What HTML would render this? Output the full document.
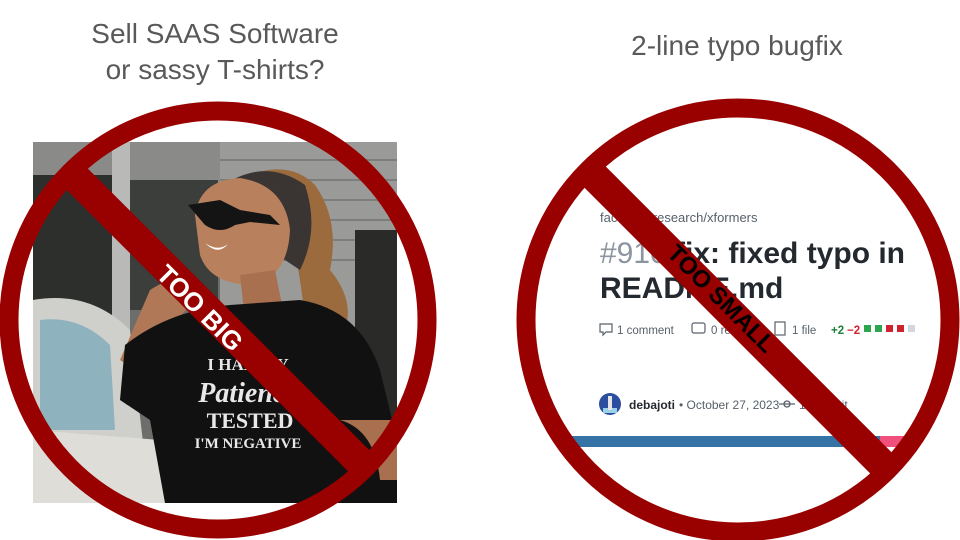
<!DOCTYPE html>
<html><head><meta charset="utf-8"><style>
html,body{margin:0;padding:0;background:#fff;width:960px;height:540px;overflow:hidden}
svg{display:block}
</style></head><body>
<svg width="960" height="540" viewBox="0 0 960 540" xmlns="http://www.w3.org/2000/svg" font-family="Liberation Sans, Arial, sans-serif">
<rect width="960" height="540" fill="#fff"/>
<g fill="#595959" font-size="28" text-anchor="middle">
<text x="215" y="43">Sell SAAS Software</text>
<text x="215" y="79">or sassy T-shirts?</text>
<text x="737" y="55">2-line typo bugfix</text>
</g>
<defs>
<clipPath id="ph"><rect x="33" y="142" width="364" height="361"/></clipPath>
<clipPath id="rc"><circle cx="738" cy="320" r="205"/></clipPath>
</defs>
<g clip-path="url(#ph)">
<rect x="33" y="142" width="364" height="361" fill="#6d6d6b"/>
<rect x="33" y="142" width="190" height="60" fill="#8a8a88"/>
<rect x="33" y="175" width="80" height="150" fill="#2c2f2c"/>
<rect x="128" y="180" width="90" height="130" fill="#3b3e3a"/>
<rect x="112" y="142" width="18" height="200" fill="#b9b9b7"/>
<rect x="220" y="142" width="177" height="361" fill="#9a9a98"/>
<g stroke="#7d7d7b" stroke-width="2">
<line x1="220" y1="160" x2="397" y2="160"/><line x1="220" y1="180" x2="397" y2="180"/><line x1="220" y1="200" x2="397" y2="200"/><line x1="220" y1="220" x2="397" y2="220"/><line x1="220" y1="240" x2="397" y2="240"/><line x1="220" y1="260" x2="397" y2="260"/>
</g>
<rect x="355" y="230" width="42" height="273" fill="#2a2a28"/>
<path d="M33 300 Q90 290 130 330 L150 503 L33 503Z" fill="#cfcfcc"/>
<path d="M40 320 Q80 315 110 345 L115 430 L40 430Z" fill="#8fb2bf"/>
<path d="M33 430 L160 440 L170 503 L33 503Z" fill="#deddd8"/>
<path d="M250 175 Q290 160 315 185 Q340 220 330 270 Q355 300 345 330 L305 320 Q300 270 290 230Z" fill="#9b6b3e"/>
<path d="M232 180 Q270 160 305 185 Q320 230 300 270 L270 250 Q250 200 232 180Z" fill="#3a3533"/>
<path d="M195 215 Q200 180 240 178 Q285 185 290 230 Q288 275 255 285 Q210 285 200 255Z" fill="#b8805d"/>
<path d="M188 205 L220 200 L240 210 L270 215 L280 225 L250 222 L235 225 Q220 235 205 225Z" fill="#141414"/>
<path d="M205 243 Q218 252 228 244 Q218 256 205 243Z" fill="#fff"/>
<path d="M240 275 L275 270 L285 320 L245 320Z" fill="#a8704f"/>
<path d="M150 290 Q180 270 200 285 Q190 310 175 320 L150 380 L120 360Z" fill="#b07856"/>
<path d="M125 345 Q170 310 230 305 L300 300 Q360 310 380 370 L397 440 L397 503 L165 503 L150 420 L120 400Z" fill="#111"/>
<g fill="#e8e8e8" text-anchor="middle" font-family="Liberation Serif, serif" font-weight="bold">
<text x="248" y="370" font-size="17">I HAD MY</text>
<text x="248" y="402" font-size="28" font-style="italic">Patience</text>
<text x="250" y="428" font-size="22">TESTED</text>
<text x="248" y="448" font-size="15">I'M NEGATIVE</text>
</g>
<path d="M340 420 Q375 430 380 480 L397 480 L397 420Z" fill="#a8704f"/>
</g>
<g clip-path="url(#rc)">
<text x="600" y="222" font-size="13" fill="#57606a">facebookresearch/xformers</text>
<text x="600" y="263" font-size="30" fill="#8c959f">#910</text>
<text x="675" y="263" font-size="30" font-weight="bold" fill="#24292f">fix: fixed typo in</text>
<text x="600" y="298" font-size="30" font-weight="bold" fill="#24292f">README.md</text>
<g font-size="11.5" fill="#57606a">
<path d="M600 324 h12 v8 h-6 l-3 3 v-3 h-3z" fill="none" stroke="#57606a" stroke-width="1.2"/>
<text x="617" y="334">1 comment</text>
<rect x="692" y="323" width="13" height="10" rx="2" fill="none" stroke="#57606a" stroke-width="1.2"/>
<text x="711" y="334">0 reviews</text>
<rect x="775" y="322" width="10" height="13" fill="none" stroke="#57606a" stroke-width="1.2"/>
<text x="792" y="334">1 file</text>
<text x="831" y="334" fill="#1a7f37" font-weight="bold">+2</text>
<text x="847" y="334" fill="#cf222e" font-weight="bold">−2</text>
<rect x="864" y="325" width="7" height="7" fill="#2da44e"/>
<rect x="875" y="325" width="7" height="7" fill="#2da44e"/>
<rect x="886" y="325" width="7" height="7" fill="#cf222e"/>
<rect x="897" y="325" width="7" height="7" fill="#cf222e"/>
<rect x="908" y="325" width="7" height="7" fill="#d0d7de"/>
</g>
<circle cx="610" cy="404" r="11" fill="#2b4f9e"/>
<rect x="603" y="408" width="14" height="5" fill="#9ad3e8"/>
<rect x="608" y="396" width="4" height="14" fill="#e6e6e6"/>
<text x="629" y="409" font-size="12" font-weight="bold" fill="#24292f">debajoti</text>
<text x="679" y="409" font-size="12" fill="#57606a">• October 27, 2023</text>
<circle cx="787" cy="404" r="3" fill="none" stroke="#57606a" stroke-width="1.3"/>
<line x1="779" y1="404" x2="795" y2="404" stroke="#57606a" stroke-width="1.3"/>
<text x="799" y="409" font-size="12" fill="#57606a">1 commit</text>
<rect x="560" y="436" width="322" height="11" fill="#3572a5"/>
<rect x="880" y="436" width="40" height="11" fill="#f1507c"/>
</g>
<g fill="none" stroke="#990000" stroke-width="19">
<circle cx="218" cy="320" r="209"/>
<circle cx="738" cy="320" r="212"/>
</g>
<g stroke="#990000" stroke-width="30">
<line x1="70" y1="172" x2="366" y2="468"/>
<line x1="590" y1="172" x2="886" y2="468"/>
</g>
<text transform="translate(200,308) rotate(45)" x="0" y="9" font-size="26" font-weight="bold" fill="#fff" text-anchor="middle">TOO BIG</text>
<text transform="translate(722,298) rotate(45)" x="0" y="9" font-size="24" font-weight="bold" fill="#000" text-anchor="middle">TOO SMALL</text>
</svg>
</body></html>
